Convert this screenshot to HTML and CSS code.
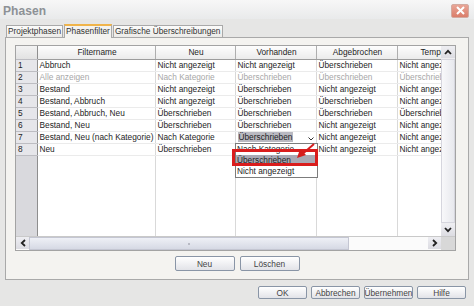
FILE: index.html
```html
<!DOCTYPE html>
<html lang="de">
  <head>
    <meta charset="UTF-8" />
    <title>Phasen</title>
    <link rel="stylesheet" href="styles.css">
  </head>
  <body>
    <div class="window">
      <div class="titlebar">
        <span class="title">Phasen</span>
        <span class="close">
          <svg width="11" height="9" viewBox="0 0 11 9"><path d="M2 1 L9 8 M9 1 L2 8" stroke="#fff" stroke-width="2"/></svg>
        </span>
      </div>

      <div class="client">
        <div class="tabs">
          <div class="tab">Projektphasen</div>
          <div class="tab active">Phasenfilter</div>
          <div class="tab">Grafische Überschreibungen</div>
        </div>

        <div class="panel">
          <div class="gridbox">
            <div class="gridMain">
              <div class="tableWrap">
                <table class="grid">
                  <colgroup>
                    <col class="cNum" /><col class="cName" /><col class="cMid" /><col class="cVal" /><col class="cVal" /><col class="cMid" />
                  </colgroup>
                  <thead>
                    <tr>
                      <th class="num"></th>
                      <th>Filtername</th>
                      <th>Neu</th>
                      <th>Vorhanden</th>
                      <th>Abgebrochen</th>
                      <th>Temporär</th>
                    </tr>
                  </thead>
                  <tbody>
                    <tr>
                      <td class="num">1</td><td>Abbruch</td><td>Nicht angezeigt</td><td>Nicht angezeigt</td><td>Überschrieben</td><td>Nicht angezeigt</td>
                    </tr>
                    <tr class="disabled">
                      <td class="num">2</td><td>Alle anzeigen</td><td>Nach Kategorie</td><td>Überschrieben</td><td>Überschrieben</td><td>Überschrieben</td>
                    </tr>
                    <tr>
                      <td class="num">3</td><td>Bestand</td><td>Nicht angezeigt</td><td>Überschrieben</td><td>Nicht angezeigt</td><td>Nicht angezeigt</td>
                    </tr>
                    <tr>
                      <td class="num">4</td><td>Bestand, Abbruch</td><td>Nicht angezeigt</td><td>Überschrieben</td><td>Überschrieben</td><td>Nicht angezeigt</td>
                    </tr>
                    <tr>
                      <td class="num">5</td><td>Bestand, Abbruch, Neu</td><td>Überschrieben</td><td>Überschrieben</td><td>Überschrieben</td><td>Überschrieben</td>
                    </tr>
                    <tr>
                      <td class="num">6</td><td>Bestand, Neu</td><td>Überschrieben</td><td>Überschrieben</td><td>Nicht angezeigt</td><td>Nicht angezeigt</td>
                    </tr>
                    <tr>
                      <td class="num">7</td><td>Bestand, Neu (nach Kategorie)</td><td>Nach Kategorie</td>
                      <td class="editing"><span class="sel">Überschrieben</span>
                        <svg class="ddArrow" width="6" height="4" viewBox="0 0 6 4"><path d="M0.5 0.5 L3 3 L5.5 0.5" fill="none" stroke="#333" stroke-width="1"/></svg>
                      </td>
                      <td>Nicht angezeigt</td><td>Nicht angezeigt</td>
                    </tr>
                    <tr>
                      <td class="num">8</td><td>Neu</td><td>Überschrieben</td><td></td><td>Nicht angezeigt</td><td>Nicht angezeigt</td>
                    </tr>
                    <tr class="filler">
                      <td class="num"></td><td></td><td></td><td></td><td></td><td></td>
                    </tr>
                  </tbody>
                </table>

                <div class="dropList">
                  <div class="item">Nach Kategorie</div>
                  <div class="item hot">Überschrieben</div>
                  <div class="item">Nicht angezeigt</div>
                </div>
                <div class="redBox"></div>
                <svg class="redArrow" width="26" height="20" viewBox="0 0 26 20">
                  <path d="M21 2 L10 11.5" stroke="#d61c1c" stroke-width="2" fill="none"/>
                  <path d="M4 16 L7 7 L13 13 Z" fill="#d61c1c"/>
                </svg>
              </div>

              <div class="vscroll">
                <div class="sbtn">
                  <svg width="8" height="6" viewBox="0 0 8 6"><path d="M1 5 L4 1.8 L7 5" fill="none" stroke="#222" stroke-width="1.8"/></svg>
                </div>
                <div class="vtrack"><div class="vthumb"></div></div>
                <div class="sbtn">
                  <svg width="8" height="6" viewBox="0 0 8 6"><path d="M1 1 L4 4.2 L7 1" fill="none" stroke="#222" stroke-width="1.8"/></svg>
                </div>
              </div>
            </div>

            <div class="hscroll">
              <div class="sbtn">
                <svg width="6" height="8" viewBox="0 0 6 8"><path d="M5 1 L1.8 4 L5 7" fill="none" stroke="#222" stroke-width="1.8"/></svg>
              </div>
              <div class="htrack"><div class="hthumb"><span class="grip"></span></div></div>
              <div class="sbtn">
                <svg width="6" height="8" viewBox="0 0 6 8"><path d="M1 1 L4.2 4 L1 7" fill="none" stroke="#222" stroke-width="1.8"/></svg>
              </div>
              <div class="corner"></div>
            </div>
          </div>

          <div class="panelButtons">
            <div class="btn big">Neu</div>
            <div class="btn big">Löschen</div>
          </div>
        </div>

        <div class="dialogButtons">
          <div class="btn">OK</div>
          <div class="btn">Abbrechen</div>
          <div class="btn">Übernehmen</div>
          <div class="btn">Hilfe</div>
        </div>
      </div>
    </div>
  </body>
</html>
```

FILE: styles.css
```css
html,
body {
  margin: 0;
  padding: 0;
  font-family: "Liberation Sans", Arial, sans-serif;
  font-size: 8.3px;
  color: #1e1e1e;
}

.window {
  width: 474px;
  height: 306px;
  background-color: #e4e4e4;
  overflow: hidden;
}

/* title bar */
.titlebar {
  height: 19px;
  display: flex;
  align-items: center;
  justify-content: space-between;
  padding: 0 5px 0 3px;
  background: linear-gradient(#f7f7f7, #e9eaeb);
}
.title {
  font-size: 12px;
  font-weight: bold;
  color: #8d9196;
  letter-spacing: 0.1px;
  margin-top: 3px;
}
.close {
  width: 16px;
  height: 12px;
  margin-top: 2px;
  border-radius: 2px;
  background: linear-gradient(#e9a596, #da7d6a);
  border: 1px solid #d3aaa0;
  display: flex;
  align-items: center;
  justify-content: center;
}

.client {
  background-color: #e6e6e5;
  padding-top: 6px;
}

/* tabs */
.tabs {
  display: flex;
  align-items: flex-end;
  padding-left: 6px;
  height: 12px;
  position: relative;
  z-index: 1;
}
.tab {
  height: 11px;
  line-height: 11px;
  padding: 0 1px;
  border: 1px solid #a9a9a9;
  border-bottom: none;
  background: linear-gradient(#fbfbfa, #ecebe8);
  color: #333;
  margin-right: 1px;
}
.tab.active {
  height: 12px;
  background: #f4f3f0;
  border-top: 2px solid #f0b44a;
  line-height: 11px;
  margin-bottom: -1px;
}

/* tab panel */
.panel {
  margin-left: 5px;
  width: 464px;
  height: 243px;
  box-sizing: border-box;
  border: 1px solid #a9a9a9;
  background-color: #f4f3f0;
  padding: 7px 0 0 9px;
}

.gridbox {
  width: 441px;
  height: 206px;
  box-sizing: border-box;
  border: 1px solid #a3a3a3;
  display: flex;
  flex-direction: column;
  background-color: #fff;
}
.gridMain {
  display: flex;
  flex: 1;
  min-height: 0;
}
.tableWrap {
  position: relative;
  width: 425px;
  overflow: hidden;
}

.grid {
  border-collapse: collapse;
  table-layout: fixed;
  width: 461px;
  height: 191px;
}
.cNum { width: 21px; }
.cName { width: 118px; }
.cMid { width: 80px; }
.cVal { width: 81px; }

.grid th,
.grid td {
  padding: 0 0 0 2px;
  white-space: nowrap;
  overflow: hidden;
  text-align: left;
  font-weight: normal;
}
.grid th {
  height: 13px;
  box-sizing: border-box;
  text-align: center;
  background: linear-gradient(#fdfdfd, #ebebeb);
  border-right: 1px solid #aeaeae;
  border-bottom: 1px solid #9c9c9c;
}
.grid td {
  height: 11px;
  line-height: 11px;
  border-right: 1px solid #d9d9d9;
  border-bottom: 1px solid #ebebeb;
}
.grid .num {
  background-color: #e6e6ea;
  border-right: 1px solid #8e8e8e;
  border-bottom: 1px solid #bdbdc2;
  padding-left: 2px;
}
.grid th.num {
  background: linear-gradient(#f3f3f3, #e2e2e2);
}
.disabled td {
  color: #a7a7a7;
}
.disabled td.num {
  color: #1e1e1e;
}
.filler td {
  height: auto;
  border-bottom: none;
}
.filler td.num {
  background-color: #d9d9dd;
}

.editing {
  position: relative;
}
.sel {
  background-color: #b9b9c1;
  padding: 0 1px;
}
.ddArrow {
  position: absolute;
  right: 2px;
  top: 5px;
}

/* open drop-down list */
.dropList {
  position: absolute;
  left: 219px;
  top: 97px;
  width: 83px;
  box-sizing: border-box;
  border: 1px solid #7c7c7c;
  background-color: #fff;
}
.item {
  height: 11px;
  line-height: 11px;
  padding-left: 1px;
}
.item.hot {
  background-color: #a9a9b4;
}

/* annotation */
.redBox {
  position: absolute;
  left: 216px;
  top: 103px;
  width: 86px;
  height: 17px;
  box-sizing: border-box;
  border: 3px solid #d91d1d;
}
.redArrow {
  position: absolute;
  left: 277px;
  top: 96px;
}

/* scroll bars */
.vscroll {
  width: 14px;
  display: flex;
  flex-direction: column;
  background-color: #eeeef0;
}
.sbtn {
  width: 14px;
  height: 12px;
  flex: none;
  display: flex;
  align-items: center;
  justify-content: center;
  background: linear-gradient(#eeeef2, #dcdce2);
}
.vtrack {
  flex: 1;
  display: flex;
}
.vthumb {
  flex: 1;
  margin: 1px 0;
  border: 1px solid #d6d6de;
  background: linear-gradient(90deg, #f8f8fa, #e8e9ee);
}

.hscroll {
  height: 13px;
  display: flex;
  border-top: 1px solid #c9c9c9;
  background-color: #fbfbfb;
}
.hscroll .sbtn {
  width: 13px;
  height: 12px;
}
.htrack {
  flex: 1;
  display: flex;
}
.hthumb {
  width: 320px;
  box-sizing: border-box;
  border: 1px solid #c4c6d2;
  background: linear-gradient(#eef0f6, #d6d9e4);
  display: flex;
  align-items: center;
  justify-content: center;
}
.grip {
  width: 2px;
  height: 2px;
  background-color: #b8bac4;
}
.corner {
  width: 14px;
  background-color: #d8d8d8;
}

/* buttons */
.btn {
  width: 49px;
  height: 13px;
  box-sizing: border-box;
  border: 1px solid #8995a6;
  border-radius: 2px;
  background: linear-gradient(#ffffff, #e2e3e8);
  display: flex;
  align-items: center;
  justify-content: center;
  color: #444;
}
.btn.big {
  width: 60px;
  height: 15px;
}
.panelButtons {
  display: flex;
  justify-content: center;
  gap: 5px;
  margin-top: 5px;
  margin-left: -9px;
}
.dialogButtons {
  display: flex;
  justify-content: flex-end;
  gap: 4px;
  padding: 6px 8px 0 0;
  height: 21px;
}
```
